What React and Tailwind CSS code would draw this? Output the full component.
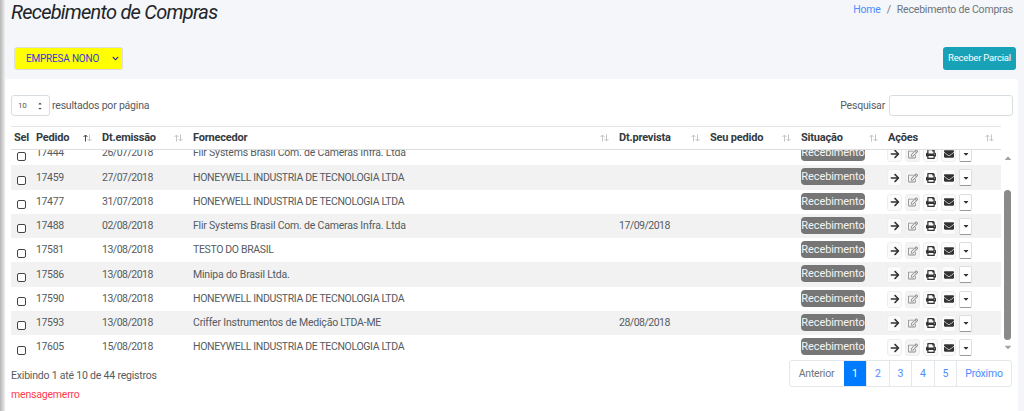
import { FaArrowRight, FaRegEdit, FaPrint, FaEnvelope, FaCaretDown, FaCaretUp, FaChevronDown } from 'react-icons/fa';

const rows = [
  ['17444', '26/07/2018', 'Flir Systems Brasil Com. de Cameras Infra. Ltda', ''],
  ['17459', '27/07/2018', 'HONEYWELL INDUSTRIA DE TECNOLOGIA LTDA', ''],
  ['17477', '31/07/2018', 'HONEYWELL INDUSTRIA DE TECNOLOGIA LTDA', ''],
  ['17488', '02/08/2018', 'Flir Systems Brasil Com. de Cameras Infra. Ltda', '17/09/2018'],
  ['17581', '13/08/2018', 'TESTO DO BRASIL', ''],
  ['17586', '13/08/2018', 'Minipa do Brasil Ltda.', ''],
  ['17590', '13/08/2018', 'HONEYWELL INDUSTRIA DE TECNOLOGIA LTDA', ''],
  ['17593', '13/08/2018', 'Criffer Instrumentos de Medição LTDA-ME', '28/08/2018'],
  ['17605', '15/08/2018', 'HONEYWELL INDUSTRIA DE TECNOLOGIA LTDA', ''],
];

const headers = [
  { label: 'Sel', w: 'w-[22px]' },
  { label: 'Pedido', w: 'w-[66px]', active: true },
  { label: 'Dt.emissão', w: 'w-[91px]', sort: true },
  { label: 'Fornecedor', w: 'w-[426px]', sort: true },
  { label: 'Dt.prevista', w: 'w-[91px]', sort: true },
  { label: 'Seu pedido', w: 'w-[91px]', sort: true },
  { label: 'Situação', w: 'w-[87px]', sort: true },
  { label: 'Ações', w: 'w-[116px]', sort: true },
];

const pages = ['1', '2', '3', '4', '5'];

// setas de ordenacao da coluna
const SortIcon = ({ active }) => (
  <svg width="9" height="8" viewBox="0 0 9 8" fill="none" strokeWidth="1">
    <path d="M2.5 7.5V1M0.5 3L2.5 1L4.5 3" stroke={active ? '#444444' : '#c4c4c4'} />
    <path d="M6.5 0.5V7M4.5 5L6.5 7L8.5 5" stroke="#c4c4c4" />
  </svg>
);

const IconBtn = ({ children, muted }) => (
  <span className={`flex h-[17px] w-[15px] items-center justify-center rounded-[3px] border border-[#eeeeee] text-[10px] ${muted ? 'bg-[#f4f4f4] text-[#8a8a8a]' : 'bg-[#fbfbfb] text-[#333333]'}`}>
    {children}
  </span>
);

const App = () => {
  return (
    <div className="flex h-[411px] w-[1024px] overflow-hidden bg-[#f4f6f9] font-['Roboto','Liberation_Sans',sans-serif] text-[10.5px] tracking-[-0.2px] text-[#555b61]">
      <div className="h-full w-[5px] shrink-0 bg-gradient-to-r from-[#b5b5b5] to-[#eeeeee]" />
      <div className="flex min-w-0 flex-1 flex-col">
        <div className="flex h-[47px] items-start justify-between pl-[6px] pr-[11px]">
          <h1 className="text-[20px] leading-[24px] tracking-[-0.75px] italic text-[#212529]">Recebimento de Compras</h1>
          <div className="flex gap-[6px] pt-[3px] text-[10.5px] leading-[14px] text-[#6c757d]">
            <span className="text-[#4d8dff]">Home</span>
            <span>/</span>
            <span>Recebimento de Compras</span>
          </div>
        </div>
        <div className="flex h-[32px] items-start justify-between pl-[9px] pr-[8px]">
          <div className="flex h-[23px] w-[109px] items-center justify-between rounded-[3px] border border-[#dddddd] bg-[#ffff00] pl-[11px] pr-[3px] text-[10px] text-[#3b3bd6]">
            <span>EMPRESA NONO</span>
            <FaChevronDown className="text-[7px] text-[#1a1a99]" />
          </div>
          <button className="h-[23px] w-[73px] rounded-[3px] bg-[#17a2b8] text-[9.5px] text-white">Receber Parcial</button>
        </div>
        <div className="mr-[6px] flex flex-1 flex-col rounded-t-[3px] bg-white pl-[6px] pr-[5px]">
          <div className="flex h-[47px] items-start justify-between pt-[16px]">
            <div className="flex items-center gap-[2px]">
              <div className="flex h-[21px] w-[39px] items-center justify-between rounded-[3px] border border-[#d8dde2] px-[6px] text-[8px]">
                <span>10</span>
                <span className="flex flex-col text-[6px] leading-[4px] text-[#444444]">
                  <FaCaretUp className="h-[5px]" />
                  <FaCaretDown className="h-[5px]" />
                </span>
              </div>
              <span className="text-[10.5px]">resultados por página</span>
            </div>
            <div className="flex items-center gap-[4px]">
              <span className="text-[10.5px]">Pesquisar</span>
              <div className="h-[21px] w-[124px] rounded-[3px] border border-[#d8dde2]" />
            </div>
          </div>

          <table className="w-[990px] table-fixed border-t border-[#e5e5e5]">
            <thead>
              <tr className="h-[23px] border-b border-[#dddddd] text-left text-[11px] text-[#343a40]">
                {headers.map((h) => (
                  <th key={h.label} className={`${h.w} pl-[3px] font-bold`}>
                    <div className="flex items-center justify-between pr-[7px]">
                      <span>{h.label}</span>
                      {h.active && <SortIcon active />}
                      {h.sort && <SortIcon />}
                    </div>
                  </th>
                ))}
              </tr>
            </thead>
          </table>

          <div className="flex h-[208px] w-[1002px]">
            <div className="h-full w-[990px] overflow-hidden">
              <table className="-mt-[9px] w-[990px] table-fixed">
                <tbody>
                  {rows.map((r, i) => (
                    <tr key={r[0]} className={`h-[24.25px] ${i % 2 === 1 ? 'bg-[#f2f2f2]' : 'bg-white'}`}>
                      <td className="w-[22px] pl-[6px] pt-[6px]">
                        <input type="checkbox" className="block h-[9px] w-[9px] appearance-none rounded-[2px] border-[1.5px] border-[#444444] bg-white" />
                      </td>
                      <td className="w-[66px] pl-[3px] tracking-[-0.35px]">{r[0]}</td>
                      <td className="w-[91px] pl-[3px] tracking-[-0.5px]">{r[1]}</td>
                      <td className={`w-[426px] pl-[3px] ${r[2] === r[2].toUpperCase() ? 'tracking-[-0.35px]' : ''}`}>{r[2]}</td>
                      <td className="w-[91px] pl-[3px] tracking-[-0.5px]">{r[3]}</td>
                      <td className="w-[91px]" />
                      <td className="w-[87px] pl-[3px]">
                        <span className="-mt-[1px] block h-[17px] w-[64px] rounded-[4px] bg-[#767676] text-center text-[11px] leading-[17px] tracking-[-0.1px] text-[#f4f4f4]">Recebimento</span>
                      </td>
                      <td className="w-[116px] pl-[2px] pt-[1px]">
                        <div className="flex items-center gap-[3px]">
                          <IconBtn><FaArrowRight /></IconBtn>
                          <IconBtn muted><FaRegEdit /></IconBtn>
                          <IconBtn><FaPrint /></IconBtn>
                          <IconBtn><FaEnvelope /></IconBtn>
                          <span className="flex h-[17px] w-[13px] items-center justify-center rounded-[2px] border border-[#dddddd] border-b-[#999999] bg-white text-[8px] text-[#333333]">
                            <FaCaretDown />
                          </span>
                        </div>
                      </td>
                    </tr>
                  ))}
                </tbody>
              </table>
            </div>
            <div className="flex w-[12px] flex-col items-center pl-[1px] text-[#a3a3a3]">
              <FaCaretUp className="mt-[3px] h-[10px] w-[10px]" />
              <div className="mt-[27px] h-[150px] w-[7px] rounded-[4px] bg-[#8a8a8a]" />
              <FaCaretDown className="mt-[2px] h-[10px] w-[10px]" />
            </div>
          </div>

          <div className="flex items-start justify-between pr-[1px] pt-[2px]">
            <div className="flex flex-col pt-[8px]">
              <span className="leading-[15px]">Exibindo 1 até 10 de 44 registros</span>
              <span className="pt-[4px] leading-[15px] text-[#ff3b4e]">mensagemerro</span>
            </div>
            <div className="flex h-[27px] items-stretch rounded-[3px] border border-[#e4e7ea] text-[#4d8dff]">
              <span className="flex w-[54px] items-center justify-center text-[#6c757d]">Anterior</span>
              {pages.map((p) => (
                <span key={p} className={`flex w-[22.5px] items-center justify-center ${p === '1' ? 'bg-[#007bff] text-white' : 'border-l border-[#e4e7ea]'}`}>{p}</span>
              ))}
              <span className="flex w-[55px] items-center justify-center border-l border-[#e4e7ea]">Próximo</span>
            </div>
          </div>
        </div>
      </div>
    </div>
  );
};

export default App;
